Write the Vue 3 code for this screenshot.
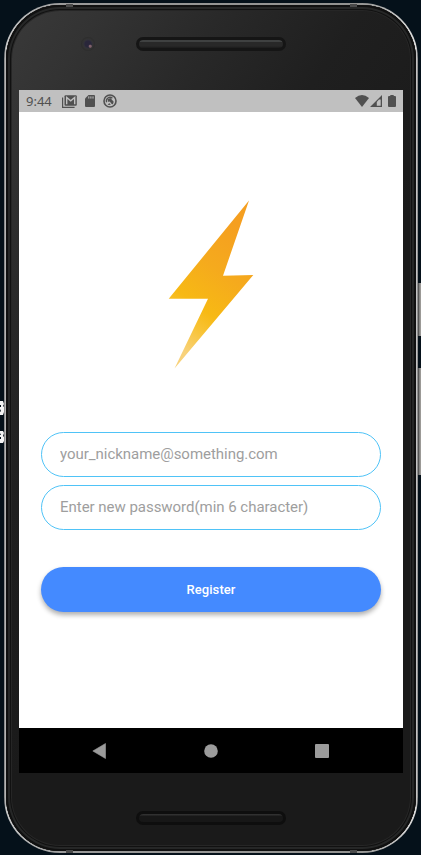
<script setup>
import { ref } from 'vue'

const email = ref('')
const password = ref('')
</script>

<template>
  <div class="desktop">
    <svg class="backdrop-marks" width="5" height="46" viewBox="0 0 5 46" aria-hidden="true">
      <path d="M0 1h3l1 3-1 2 1 1v5l-1 3H0v-3l1-1-1-2V7h1V5H0zM0 31h3l1 2-1 3 1 1v4l-1 2H0v-4h1v-2H0v-2h1l-1-2z" fill="#f4f4f4" />
    </svg>
    <i class="side-button power"></i>
    <i class="side-button volume"></i>

    <div class="phone">
      <i class="antenna top-left"></i>
      <i class="antenna top-right"></i>
      <i class="antenna bottom-left"></i>
      <i class="antenna bottom-right"></i>
      <div class="body">
        <header class="bezel bezel-top">
          <i class="camera"></i>
          <i class="speaker"></i>
        </header>

        <div class="screen">
          <div class="status">
            <span class="clock">9:44</span>
            <svg class="mail" width="15" height="13" viewBox="0 0 15 13">
              <path d="M.6 2.5v9.9h12" fill="none" stroke="#505050" stroke-width="1.2" />
              <rect x="2.5" y=".2" width="12.3" height="10.6" rx="1" fill="#505050" />
              <path d="M4.7 9.2V2.5l4 3.3 4-3.3v6.7" fill="none" stroke="#c0c0c0" stroke-width="1.4" />
            </svg>
            <svg class="card" width="10" height="12" viewBox="0 0 10 12">
              <path d="M3.5 0H9q1 0 1 1v10q0 1-1 1H1q-1 0-1-1V3.5z" fill="#505050" />
              <path d="M3.8 1.4v2.2M5.9 1.4v2.2M8 1.4v2.2" stroke="#c0c0c0" stroke-width="1" />
            </svg>
            <svg class="sync" width="14" height="14" viewBox="0 0 14 14">
              <circle cx="7" cy="7" r="6" fill="none" stroke="#505050" stroke-width="1.6" />
              <path d="M3.6 8.2A3.6 3.6 0 0 1 9.4 4.3" fill="none" stroke="#505050" stroke-width="1.3" />
              <path d="M4.4 5.5 7.4 4l3.3 3.7-.8 2.5-1.2-.3-1.9-2.3-1.4.5zM4.6 10.3l2-1 1.2 1.5-2 .2z" fill="#505050" />
            </svg>
            <span class="spacer"></span>
            <svg width="14" height="12" viewBox="0 0 14 12">
              <path d="M0 3Q7-2.8 14 3L7 12z" fill="#505050" />
            </svg>
            <svg class="signal" width="12" height="12" viewBox="0 0 12 12">
              <path d="M12 0v12H0zM10.7 4.5H9L6.8 7v3.7h3.9z" fill="#505050" fill-rule="evenodd" />
            </svg>
            <svg class="battery" width="8" height="12" viewBox="0 0 8 12">
              <path d="M2.3 0h3.4v1H7q1 0 1 1v9q0 1-1 1H1q-1 0-1-1V2q0-1 1-1h1.3z" fill="#505050" />
            </svg>
          </div>

          <main class="content">
            <svg class="bolt" width="86" height="170" viewBox="0 0 86 170">
              <defs>
                <linearGradient id="amber" gradientUnits="userSpaceOnUse" x1="75" y1="30" x2="-3" y2="138">
                  <stop offset="0" stop-color="#f59f20" />
                  <stop offset=".35" stop-color="#f5aa1d" />
                  <stop offset=".66" stop-color="#f7b914" />
                  <stop offset=".8" stop-color="#f8c335" />
                  <stop offset="1" stop-color="#f8d27b" />
                </linearGradient>
              </defs>
              <path d="M81 .5 55 75.7 85.3 75 6.5 168.5 40 98.8H.7z" fill="url(#amber)" />
            </svg>

            <form class="form" @submit.prevent>
              <input v-model="email" class="field" type="text" placeholder="your_nickname@something.com" />
              <input v-model="password" class="field" type="password" placeholder="Enter new password(min 6 character)" />
              <button class="register" type="submit">Register</button>
            </form>
          </main>

          <nav class="nav">
            <svg width="14" height="16" viewBox="0 0 14 16"><path d="M13.5.5v15L.8 8z" fill="#9b9b9b" stroke="#9b9b9b" stroke-width=".6" stroke-linejoin="round" /></svg>
            <svg width="14" height="14" viewBox="0 0 14 14"><circle cx="7" cy="7" r="6.8" fill="#9b9b9b" /></svg>
            <svg width="14" height="14" viewBox="0 0 14 14"><rect width="14" height="14" rx="1" fill="#9b9b9b" /></svg>
          </nav>
        </div>

        <footer class="bezel bezel-bottom">
          <i class="speaker dark"></i>
        </footer>
      </div>
    </div>
  </div>
</template>

<style>
body {
  overflow: hidden;
  background: #05111a;
}
</style>

<style scoped>
* {
  box-sizing: border-box;
}
.desktop {
  position: relative;
  width: 421px;
  height: 855px;
  padding: 3px 4px 2px;
  overflow: hidden;
  background: #05111a;
  font-family: Roboto, sans-serif;
}
.backdrop-marks {
  position: absolute;
  left: 0;
  top: 400px;
  z-index: 2;
}
.side-button {
  position: absolute;
  left: 418px;
  width: 3px;
  background: linear-gradient(90deg, #555 0 1px, #858583 1px 2px, #9b9996 2px);
}
.power {
  top: 283px;
  height: 53px;
}
.volume {
  top: 368px;
  height: 107px;
}
.phone {
  position: relative;
  width: 414px;
  height: 850px;
  padding: 2px;
  border-radius: 56px;
  background: linear-gradient(90deg, #777 0, #c8c8c8 2px, #999 60px, #929290 355px, #ddd 412px, #777 414px);
}
.antenna {
  position: absolute;
  width: 7px;
  height: 3px;
  background: #4b4b4b;
}
.top-left {
  left: 62px;
  top: 1px;
}
.top-right {
  left: 346px;
  top: 1px;
}
.bottom-left {
  left: 62px;
  bottom: 0;
}
.bottom-right {
  left: 346px;
  bottom: 0;
}
.body {
  height: 846px;
  padding: 0 13px;
  border-radius: 54px;
  background: linear-gradient(125deg, #3a3a3a 0, #333 10%, #292929 22%, #1f1f1f 36%, #1a1a1a 55%, #1a1a1a 100%);
  box-shadow: inset 0 0 0 2px #101010, inset 0 0 0 4px #262727, inset 0 0 0 5px #111, inset 0 0 0 6px #262626;
}
.bezel {
  display: flex;
}
.bezel-top {
  height: 85px;
  padding: 32px 0 0 62px;
  gap: 41px;
}
.camera {
  flex-shrink: 0;
  width: 14px;
  height: 14px;
  border-radius: 50%;
  background: radial-gradient(circle at 66% 66%, #80616b 0 1px, transparent 2px), radial-gradient(circle, #29263a 0 3px, #30303a 4px, #333 5px, #2c2c2c 7px);
}
.speaker {
  flex-shrink: 0;
  width: 150px;
  height: 14px;
  border: 3px solid #151515;
  border-radius: 7px;
  background: linear-gradient(#3f4141 0 2px, #282828 2px 6px, #1b1b1b) padding-box;
}
.bezel-bottom {
  padding: 38px 0 0 117px;
}
.speaker.dark {
  border-color: #0e0e0e;
  background: linear-gradient(#303030 0 1px, #171717 2px) padding-box;
}
.screen {
  display: flex;
  flex-direction: column;
  width: 384px;
  height: 683px;
  background: #fff;
}
.status {
  display: flex;
  align-items: center;
  height: 22px;
  padding: 0 7px;
  background: #c0c0c0;
  color: #505050;
}
.clock {
  width: 26px;
  font: 400 13px/22px "Noto Sans", sans-serif;
}
.mail {
  margin-left: 10px;
}
.card {
  margin-left: 8px;
}
.sync {
  margin-left: 8px;
}
.spacer {
  flex: 1;
}
.signal {
  margin-left: 1px;
}
.battery {
  margin-left: 6px;
}
.content {
  display: flex;
  flex: 1;
  flex-direction: column;
  align-items: center;
  padding: 88px 22px 0;
}
.bolt {
  flex-shrink: 0;
}
.form {
  display: flex;
  flex-direction: column;
  width: 340px;
  margin-top: 62px;
}
.field {
  width: 340px;
  height: 45px;
  margin: 0 0 8px;
  padding: 0 18px 1px;
  border: 1px solid #4fc3f7;
  border-radius: 23px;
  outline: none;
  background: #fff;
  color: #333;
  font: 400 15px Roboto, sans-serif;
  letter-spacing: -0.03px;
}
.field::placeholder {
  color: #9e9e9e;
  opacity: 1;
}
.register {
  height: 45px;
  margin-top: 29px;
  padding: 0;
  border: 0;
  border-radius: 23px;
  background: #448aff;
  box-shadow: 0 3px 5px rgba(0, 0, 0, 0.32);
  color: #fff;
  font: 500 13px Roboto, sans-serif;
  letter-spacing: 0.08px;
}
.nav {
  display: flex;
  align-items: center;
  justify-content: space-between;
  height: 45px;
  padding: 0 74px 0 73px;
  background: #000;
}
</style>
